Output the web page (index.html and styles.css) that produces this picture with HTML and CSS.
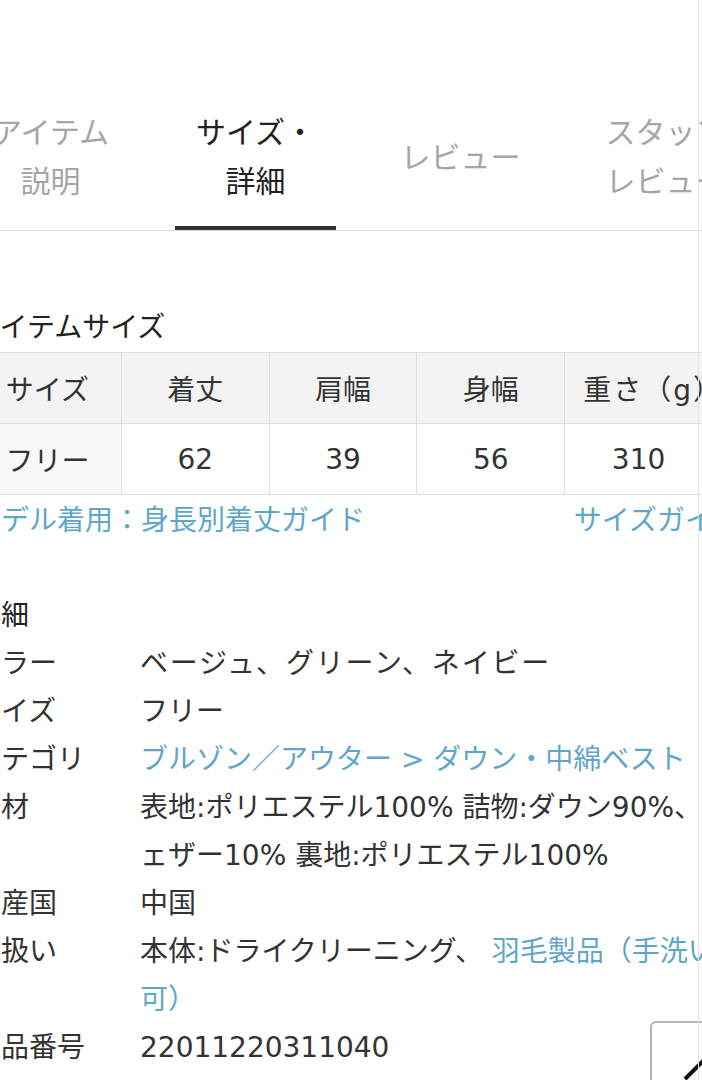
FILE: index.html
```html
<!DOCTYPE html>
<html lang="ja">
<head>
  <meta charset="UTF-8">
  <meta name="viewport" content="width=device-width, initial-scale=1.0">
  <title>サイズ・詳細</title>
  <link rel="stylesheet" href="styles.css">
</head>
<body>
  <div id="page">
    <nav class="tabs">
      <div class="tab"><span class="tab-label">アイテム<br>説明</span></div>
      <div class="tab active"><span class="tab-label">サイズ・<br>詳細</span></div>
      <div class="tab"><span class="tab-label">レビュー</span></div>
      <div class="tab"><span class="tab-label">スタッフ<br>レビュー</span></div>
    </nav>

    <h2 class="section-title">アイテムサイズ</h2>
    <table class="size-table">
      <tr>
        <th>サイズ</th>
        <th>着丈</th>
        <th>肩幅</th>
        <th>身幅</th>
        <th class="weight">重さ（g）</th>
      </tr>
      <tr>
        <th class="row-head">フリー</th>
        <td>62</td>
        <td>39</td>
        <td>56</td>
        <td>310</td>
      </tr>
    </table>
    <div class="guide-links">
      <a href="#">モデル着用：身長別着丈ガイド</a>
      <a href="#">サイズガイド</a>
    </div>

    <h2 class="section-title detail-title">詳細</h2>
    <dl class="details">
      <dt>カラー</dt>
      <dd class="spaced">ベージュ、グリーン、ネイビー</dd>
      <dt>サイズ</dt>
      <dd>フリー</dd>
      <dt>カテゴリ</dt>
      <dd><a href="#">ブルゾン／アウター &gt; ダウン・中綿ベスト</a></dd>
      <dt>素材</dt>
      <dd>表地:ポリエステル100% 詰物:ダウン90%、フ<br>ェザー10% 裏地:ポリエステル100%</dd>
      <dt>原産国</dt>
      <dd>中国</dd>
      <dt>取扱い</dt>
      <dd>本体:ドライクリーニング、 <a href="#">羽毛製品（手洗い<br>可）</a></dd>
      <dt>商品番号</dt>
      <dd>22011220311040</dd>
    </dl>
  </div>

  <button id="to-top" aria-label="ページトップへ">
    <svg width="100" height="100" viewBox="0 0 100 100">
      <polyline points="33,56 55,34 77,56" fill="none" stroke="#111" stroke-width="4"/>
    </svg>
  </button>
</body>
</html>
```

FILE: styles.css
```css
html, body {
  overflow: hidden;
}
body {
  font-family: "DejaVu Sans", "Noto Sans CJK JP", sans-serif;
  background-color: #fff;
  color: #333;
  margin: 0;
  padding: 0;
  font-size: 28px;
}
body::after {
  content: "";
  position: fixed;
  top: 0;
  bottom: 0;
  left: 698px;
  width: 1px;
  background-color: #e4e4e4;
}
a {
  color: #5fa6c9;
  text-decoration: none;
}
#page {
  margin-left: -27px;
  width: 768px;
}
.tabs {
  display: flex;
  margin-left: -25px;
  width: 820px;
  border-bottom: 1px solid #dedede;
}
.tab {
  width: 205px;
  padding: 0 22px;
  box-sizing: border-box;
  display: flex;
  justify-content: center;
  align-items: stretch;
}
.tab-label {
  flex: 1;
  display: flex;
  align-items: center;
  justify-content: center;
  text-align: center;
  font-size: 30px;
  line-height: 49px;
  padding: 108px 0 20px;
  border-bottom: 4px solid transparent;
  color: #a6a6a6;
}
.tab.active .tab-label {
  color: #222;
  border-bottom-color: #333;
}
.section-title {
  font-size: 28px;
  font-weight: normal;
  color: #222;
  line-height: 40px;
  margin: 77px 0 4px;
}
.size-table {
  border-collapse: collapse;
  width: 740px;
  table-layout: fixed;
}
.size-table th,
.size-table td {
  border: 1px solid #e0e0e0;
  height: 70px;
  padding: 0;
  text-align: center;
  font-weight: normal;
  white-space: nowrap;
}
.size-table th {
  background-color: #f3f3f3;
}
.size-table .row-head {
  background-color: #f8f8f8;
}
.size-table .weight {
  letter-spacing: 2px;
  padding-left: 18px;
}
.guide-links {
  display: flex;
  justify-content: space-between;
  line-height: 40px;
  margin-top: 6px;
}
.detail-title {
  line-height: 48px;
  margin: 51px 0 0;
}
.details {
  display: grid;
  grid-template-columns: 167px 1fr;
  line-height: 48px;
  margin: 0;
}
.details dt,
.details dd {
  margin: 0;
  white-space: nowrap;
}
.details .spaced {
  letter-spacing: 1.8px;
}
#to-top {
  position: fixed;
  left: 650px;
  top: 1021px;
  width: 104px;
  height: 104px;
  padding: 0;
  border: 2px solid #b4b4b4;
  border-radius: 6px;
  background-color: #fff;
}
#to-top svg {
  display: block;
}
```
